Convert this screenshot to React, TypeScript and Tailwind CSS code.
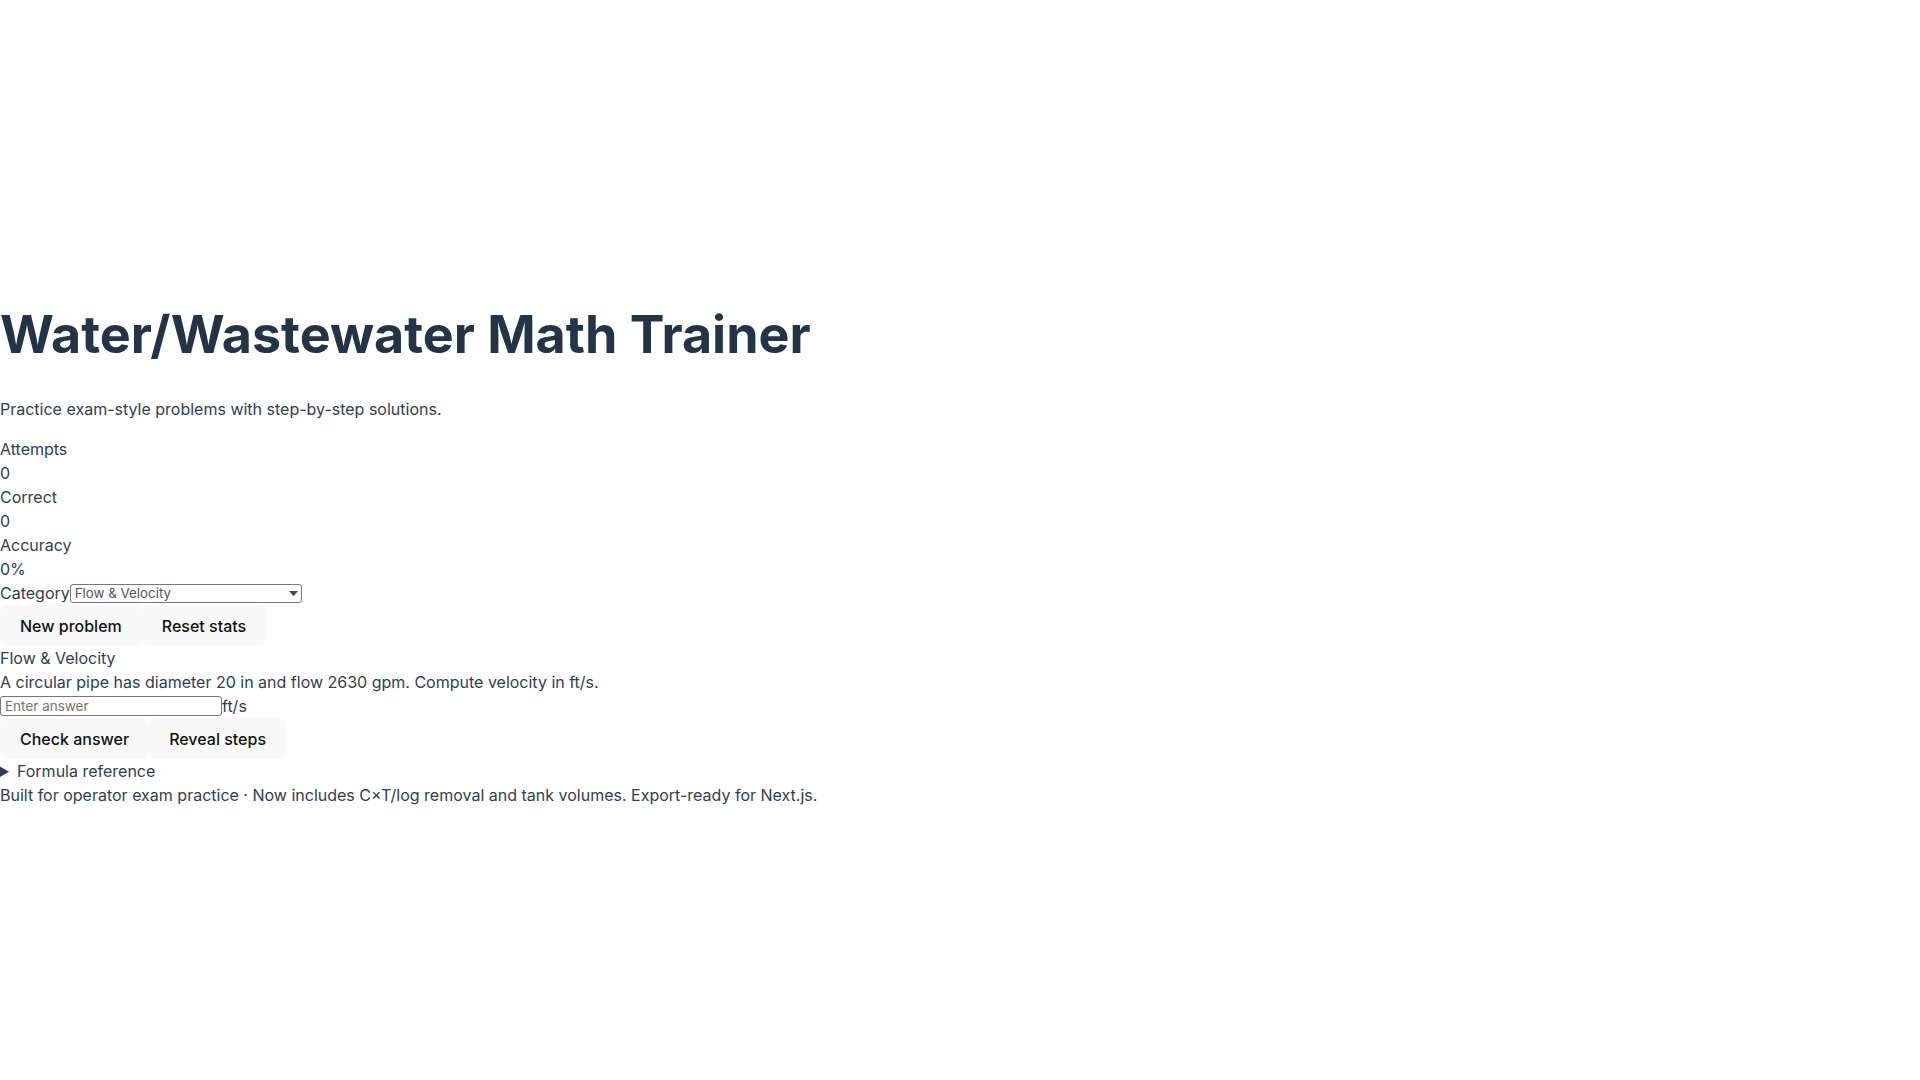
import { useState } from "react";

const CATEGORIES = ["Flow & Velocity", "Chlorine Dosage", "C×T / Log Removal", "Tank Volumes", "Detention Time"];

export default function App() {
  const [category, setCategory] = useState(CATEGORIES[0]);
  const [answer, setAnswer] = useState("");
  const stats = { attempts: 0, correct: 0 };
  const accuracy = stats.attempts ? Math.round((stats.correct / stats.attempts) * 100) : 0;

  return (
    <div className="min-h-screen flex flex-col justify-center pt-9 font-['Inter',sans-serif] text-base leading-6 text-[#2f3e50] bg-white">
      <h1 className="text-[52px] leading-none font-bold text-[#243447] mb-9">Water/Wastewater Math Trainer</h1>
      <p className="mb-4">Practice exam-style problems with step-by-step solutions.</p>

      {/* Stats */}
      <div>
        <div>Attempts</div>
        <div>{stats.attempts}</div>
      </div>
      <div>
        <div>Correct</div>
        <div>{stats.correct}</div>
      </div>
      <div>
        <div>Accuracy</div>
        <div>{accuracy}%</div>
      </div>

      <label className="flex items-center h-6">
        Category
        <span className="relative">
          <select
            value={category}
            onChange={(e) => setCategory(e.target.value)}
            className="block appearance-none w-[232px] h-[19px] border border-[#767676] rounded-[3px] text-[13.33px] leading-4 text-[#555] pl-[4px] bg-white"
          >
            {CATEGORIES.map((c) => (
              <option key={c}>{c}</option>
            ))}
          </select>
          <svg className="absolute right-[4px] top-[7px] pointer-events-none" width="9" height="5" viewBox="0 0 9 5">
            <path d="M0 0h9L4.5 5z" fill="#444" />
          </svg>
        </span>
      </label>

      <div className="flex">
        <button className="h-[41px] px-5 rounded-lg bg-[#f9f9f9] font-medium text-[#111]">New problem</button>
        <button className="h-[41px] px-5 rounded-lg bg-[#f9f9f9] font-medium text-[#111]">Reset stats</button>
      </div>

      {/* Problem */}
      <div>{category}</div>
      <p>A circular pipe has diameter 20 in and flow 2630 gpm. Compute velocity in ft/s.</p>
      <div className="flex items-center h-6">
        <input
          value={answer}
          onChange={(e) => setAnswer(e.target.value)}
          placeholder="Enter answer"
          className="w-[222px] h-5 border border-[#767676] rounded-[3px] text-[13.5px] px-[4px] placeholder:text-[#757575]"
        />
        ft/s
      </div>
      <div className="flex">
        <button className="h-[41px] px-5 rounded-lg bg-[#f9f9f9] font-medium text-[#111]">Check answer</button>
        <button className="h-[41px] px-5 rounded-lg bg-[#f9f9f9] font-medium text-[#111]">Reveal steps</button>
      </div>

      <details>
        <summary className="cursor-pointer">Formula reference</summary>
        <ul>
          <li>Q = V × A</li>
        </ul>
      </details>

      <footer>Built for operator exam practice · Now includes C×T/log removal and tank volumes. Export-ready for Next.js.</footer>
    </div>
  );
}
